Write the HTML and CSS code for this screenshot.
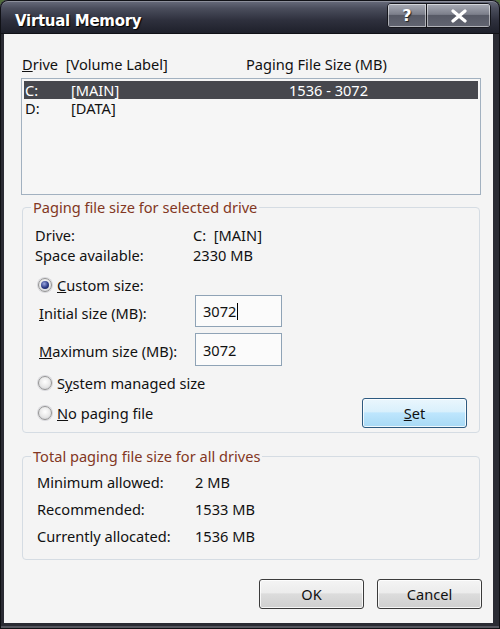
FILE: index.html
```html
<!DOCTYPE html>
<html>
<head>
<meta charset="utf-8">
<title>Virtual Memory</title>
<link rel="stylesheet" href="styles.css">
</head>
<body>
<div class="window">
  <div class="titlebar">
    <span class="title">Virtual Memory</span>
    <div class="caption-btns">
      <div class="cbtn help">?</div>
      <div class="cbtn close">
        <svg width="18" height="14" viewBox="0 0 18 14"><path d="M3 2 L15 12 M15 2 L3 12" stroke="#fff" stroke-width="3.2" stroke-linecap="round" fill="none"/></svg>
      </div>
    </div>
  </div>
  <div class="client">
    <div class="list-head">
      <span class="col-drive"><u>D</u>rive&nbsp; [Volume Label]</span>
      <span class="col-size">Paging File Size (MB)</span>
    </div>
    <div class="listbox">
      <div class="row selected"><span class="c1">C:</span><span class="c2">[MAIN]</span><span class="c3">1536 - 3072</span></div>
      <div class="row"><span class="c1">D:</span><span class="c2">[DATA]</span></div>
    </div>

    <fieldset class="group g1">
      <legend>Paging file size for selected drive</legend>
      <div class="info"><span class="lbl">Drive:</span><span>C:&nbsp; [MAIN]</span></div>
      <div class="info"><span class="lbl">Space available:</span><span>2330 MB</span></div>
      <div class="radio-row custom"><span class="radio checked"></span><span><u>C</u>ustom size:</span></div>
      <div class="size-row initial"><span class="size-lbl"><u>I</u>nitial size (MB):</span><div class="input">3072<span class="caret"></span></div></div>
      <div class="size-row maximum"><span class="size-lbl"><u>M</u>aximum size (MB):</span><div class="input">3072</div></div>
      <div class="radio-row system"><span class="radio"></span><span>S<u>y</u>stem managed size</span></div>
      <div class="last-row">
        <div class="radio-row"><span class="radio"></span><span><u>N</u>o paging file</span></div>
        <div class="btn set"><u>S</u>et</div>
      </div>
    </fieldset>

    <fieldset class="group g2">
      <legend>Total paging file size for all drives</legend>
      <div class="total"><span class="lbl">Minimum allowed:</span><span>2 MB</span></div>
      <div class="total"><span class="lbl">Recommended:</span><span>1533 MB</span></div>
      <div class="total"><span class="lbl">Currently allocated:</span><span>1536 MB</span></div>
    </fieldset>

    <div class="buttons">
      <div class="btn">OK</div>
      <div class="btn">Cancel</div>
    </div>
  </div>
</div>
</body>
</html>
```
FILE: styles.css
```css
html, body {
  margin: 0;
  padding: 0;
}
body {
  width: 500px;
  height: 629px;
  overflow: hidden;
  background: #4f6b3c;
  font-family: "Noto Sans", "Open Sans", sans-serif;
  font-size: 14.6px;
  color: #111;
}
.window {
  width: 500px;
  height: 629px;
  box-sizing: border-box;
  display: flex;
  flex-direction: column;
  background: #2a2b33;
  border-radius: 8px 8px 0 0;
  box-shadow: inset 0 0 0 1px #0f1014, inset 0 -3px 0 #55565e;
}
.titlebar {
  height: 34px;
  flex: none;
  display: flex;
  justify-content: space-between;
  align-items: flex-start;
  padding: 0 9px 0 15px;
  border-radius: 8px 8px 0 0;
  background: linear-gradient(#6c7080 0%, #4a4d5c 25%, #2e303d 60%, #1d1f29 100%);
  box-shadow: inset 0 0 0 1px #101116, inset 0 2px 0 rgba(255,255,255,0.25);
}
.title {
  padding-top: 11px;
  line-height: 20px;
  font-family: "DejaVu Sans", sans-serif;
  font-weight: bold;
  font-size: 15px;
  letter-spacing: -0.3px;
  color: #fff;
  text-shadow: 1px 1px 1px #000;
}
.caption-btns {
  margin-top: 3px;
  display: flex;
  border: 1px solid #15161c;
  border-radius: 4px;
  overflow: hidden;
}
.cbtn {
  height: 23px;
  display: flex;
  align-items: center;
  justify-content: center;
  background: linear-gradient(#a9acb6 0%, #7c7f8b 45%, #575a66 50%, #626572 100%);
  box-shadow: inset 0 0 0 1px rgba(255,255,255,0.5);
  color: #fff;
  font-family: "DejaVu Sans", sans-serif;
  font-weight: bold;
  font-size: 16px;
  text-shadow: 1px 1px 1px #222;
}
.cbtn.help {
  width: 38px;
  border-right: 1px solid #15161c;
}
.cbtn.close {
  width: 63px;
}
.client {
  flex: 1;
  margin: 0 7px 6px 4px;
  padding: 21px 12px 0 17px;
  background: #f4f4f4;
  display: flex;
  flex-direction: column;
}
.list-head {
  display: flex;
  line-height: 18px;
  padding-left: 1px;
}
.col-drive {
  width: 224px;
}
.listbox {
  margin-top: 5px;
  height: 117px;
  box-sizing: border-box;
  border: 1px solid #a2b1c0;
  background: #f6f6f6;
  padding: 2px;
}
.row {
  height: 18px;
  line-height: 18px;
  display: flex;
}
.row.selected {
  background: #47484e;
  color: #fff;
}
.c1 {
  width: 46px;
  padding-left: 1px;
}
.c2 {
  width: 218px;
}
fieldset.group {
  margin: 3px 1px 0 1px;
  border: 1px solid #d5dce3;
  border-radius: 4px;
  padding: 0 12px 4px 12px;
  min-width: 0;
}
fieldset.group legend {
  padding: 0 2px;
  margin-left: -4px;
  line-height: 18px;
  color: #823723;
}
.g1 .info:first-of-type {
  margin-top: 9px;
}
.info {
  display: flex;
  line-height: 20px;
}
.info .lbl {
  width: 158px;
}
.radio-row {
  display: flex;
  align-items: center;
  height: 20px;
  padding-left: 3px;
}
.radio {
  width: 14px;
  height: 14px;
  box-sizing: border-box;
  border-radius: 50%;
  border: 1px solid #959595;
  background: radial-gradient(circle at 50% 40%, #ffffff 0%, #e8e8e8 55%, #c4c6cc 100%);
  box-shadow: 0 0 0 1px #d8d8dc;
  margin-right: 5px;
  flex: none;
  display: flex;
  align-items: center;
  justify-content: center;
}
.radio.checked::after {
  content: "";
  width: 8px;
  height: 8px;
  border-radius: 50%;
  background: radial-gradient(circle at 40% 35%, #9aa6e0 0%, #2b3a86 55%, #141c4a 100%);
}
.radio-row.custom {
  margin-top: 10px;
}
.size-row {
  display: flex;
  align-items: center;
}
.size-row.initial {
  height: 32px;
}
.size-row.maximum {
  height: 33px;
  margin-top: 6px;
}
.size-lbl {
  width: 156px;
  padding-left: 4px;
  padding-top: 3px;
}
.input {
  width: 87px;
  height: 100%;
  box-sizing: border-box;
  border: 1px solid #8fa3b6;
  background: #fbfbfb;
  padding-left: 7px;
  display: flex;
  align-items: center;
}
.caret {
  display: inline-block;
  width: 1px;
  height: 17px;
  background: #000;
  margin-left: 1px;
}
.radio-row.system {
  margin-top: 7px;
}
.last-row {
  margin-top: 5px;
  display: flex;
  justify-content: space-between;
  align-items: center;
}
.btn {
  width: 105px;
  height: 30px;
  box-sizing: border-box;
  border: 1px solid #3b3b3b;
  border-radius: 3px;
  display: flex;
  align-items: center;
  justify-content: center;
  background: linear-gradient(#f4f4f4 0%, #ececec 45%, #dcdcdc 50%, #cfcfcf 100%);
  box-shadow: inset 0 0 0 1px rgba(255,255,255,0.8);
  color: #111;
}
.btn.set {
  border-color: #2d5a80;
  background: linear-gradient(#eaf6fd 0%, #d9f0fc 45%, #bee6fd 50%, #a7d9f5 100%);
}
.g2 {
  padding-left: 14px !important;
  padding-bottom: 9px !important;
}
fieldset.g2 {
  margin-top: 14px;
}
.g2 legend {
  margin-left: -6px !important;
}
.total {
  display: flex;
  line-height: 27px;
}
.g2 .total:first-of-type {
  margin-top: 4px;
}
.total .lbl {
  width: 158px;
}
.buttons {
  margin-top: 19px;
  margin-right: -1px;
  display: flex;
  justify-content: flex-end;
  gap: 13px;
}
```
